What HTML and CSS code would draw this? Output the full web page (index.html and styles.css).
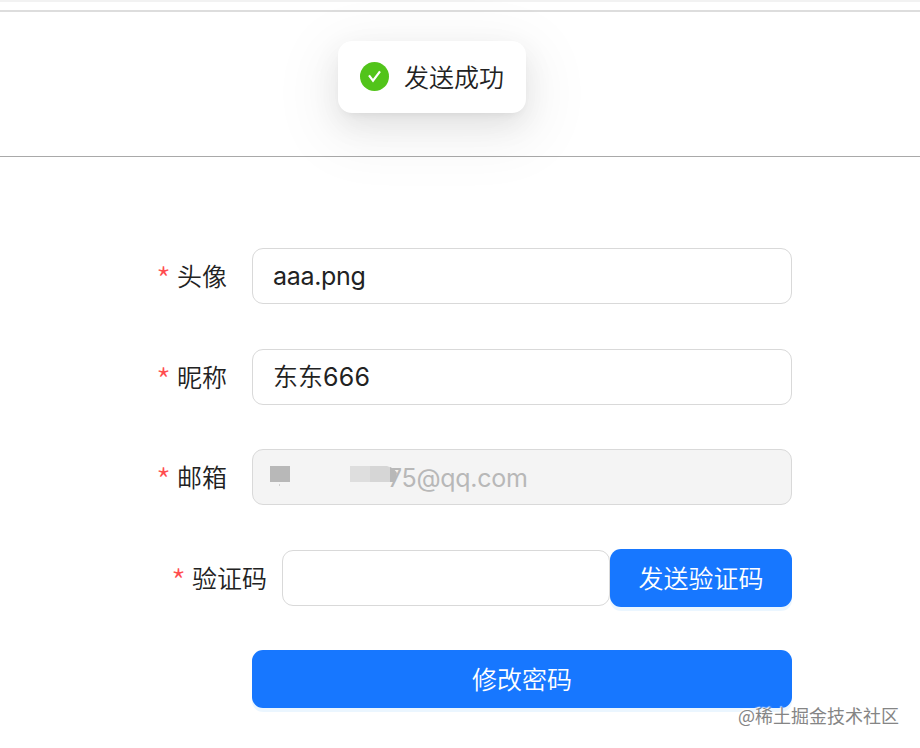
FILE: index.html
```html
<!DOCTYPE html>
<html lang="zh-CN">
<head>
<meta charset="utf-8">
<title>修改信息</title>
<link rel="stylesheet" href="styles.css">
</head>
<body>
<header class="header"><div class="header-rule"></div></header>
<div class="message" role="status">
  <svg class="message-icon" viewBox="0 0 29 29"><circle cx="14.5" cy="14.5" r="14.5" fill="#52c41a"/><path d="M9 13.4L13 18.6L20 9.4" fill="none" stroke="#fff" stroke-width="2.2"/></svg>
  <span class="message-text">发送成功</span>
</div>
<form class="form">
  <div class="row">
    <label class="label"><span class="star">*</span><span>头像</span></label>
    <div class="input"><span class="latin">aaa.png</span></div>
  </div>
  <div class="row">
    <label class="label"><span class="star">*</span><span>昵称</span></label>
    <div class="input">东东<span class="digits">666</span></div>
  </div>
  <div class="row row-email">
    <label class="label"><span class="star">*</span><span>邮箱</span></label>
    <div class="input disabled"><span class="latin email">75@qq.com</span>
      <svg class="mask" viewBox="0 0 130 24"><path d="M117 0h3v24h-3z" fill="#f4f4f4"/><rect x="0" y="1" width="20" height="16" fill="#b8b8b8"/><rect x="9" y="19" width="1" height="2" fill="#d0d0d0"/><path d="M80 1h20v16H80z" fill="#dedede"/><path d="M100 1h17q4 1 7 4l-4 12h-20z" fill="#d6d6d6"/><path d="M120 2q5 2 7 6l-2 9h-5z" fill="#b8b8b8"/></svg>
    </div>
  </div>
  <div class="row row-code">
    <label class="label label-code"><span class="star">*</span><span>验证码</span></label>
    <div class="input"></div>
    <button class="button button-send" type="button">发送验证码</button>
  </div>
  <button class="button button-submit" type="button">修改密码</button>
</form>
<div class="watermark">@稀土掘金技术社区</div>
</body>
</html>
```
FILE: styles.css
```css
* { box-sizing: border-box; }
body {
  margin: 0;
  height: 748px;
  overflow: hidden;
  background: #fff;
  color: #222;
  font: 25px/36px Inter, "Noto Sans CJK SC", sans-serif;
  font-weight: 350;
}
.header {
  height: 157px;
  padding-top: 8px;
  border-top: 2px solid #f2f2f2;
  border-bottom: 1px solid #a9a9a9;
}
.header-rule { height: 2px; background: #ddd; }
.message {
  position: absolute;
  left: 338px;
  top: 41px;
  width: 188px;
  height: 72px;
  padding: 0 22px 1px;
  display: flex;
  align-items: center;
  gap: 15px;
  border-radius: 14px;
  background: #fff;
  box-shadow: 0 11px 29px rgba(0,0,0,.08), 0 5px 11px -7px rgba(0,0,0,.12), 0 16px 58px 16px rgba(0,0,0,.05);
}
.message-icon { width: 29px; height: 29px; flex: none; }
.message-text { white-space: nowrap; padding-top: 2px; }
.form {
  width: 792px;
  padding: 91px 0 0 152px;
}
.row {
  display: flex;
  align-items: center;
  height: 56px;
  margin-bottom: 45px;
}
.row-email { margin-top: -1px; margin-bottom: 44px; }
.row-code { height: 58px; margin-bottom: 43px; }
.label {
  display: flex;
  align-items: flex-start;
  justify-content: flex-end;
  width: 75px;
  height: 38px;
  margin-right: 25px;
  padding-top: 2px;
  flex: none;
  white-space: nowrap;
}
.label-code { width: 115px; margin-right: 15px; }
.star {
  color: #ff4d4f;
  margin-right: 6px;
  font: 300 34px/40px "Noto Sans CJK SC", sans-serif;
}
.input {
  position: relative;
  flex: 1;
  height: 56px;
  padding: 0 20px;
  border: 1px solid #d9d9d9;
  border-radius: 11px;
  line-height: 55px;
  white-space: nowrap;
}
.latin, .digits { font-weight: 400; letter-spacing: -.3px; }
.digits { letter-spacing: .2px; }
.disabled { background: #f4f4f4; color: #b8b8b8; line-height: 56px; }
.email { margin-left: 115px; }
.mask { position: absolute; left: 17px; top: 15px; width: 130px; height: 24px; }
.button {
  height: 58px;
  padding: 1px 0 0;
  border: 0;
  border-radius: 11px;
  background: #1777ff;
  color: #fff;
  font: inherit;
  box-shadow: 0 4px 0 rgba(5,145,255,.08);
}
.button-send { width: 182px; flex: none; }
.button-submit { display: block; width: 540px; margin-left: 100px; }
.watermark {
  position: absolute;
  right: 21px;
  bottom: 19px;
  color: #858585;
  font: 18px/28px "Noto Sans CJK SC", sans-serif;
  text-shadow: 0 0 2px #fff, -1px -1px 1px #fff;
  white-space: nowrap;
}
```
